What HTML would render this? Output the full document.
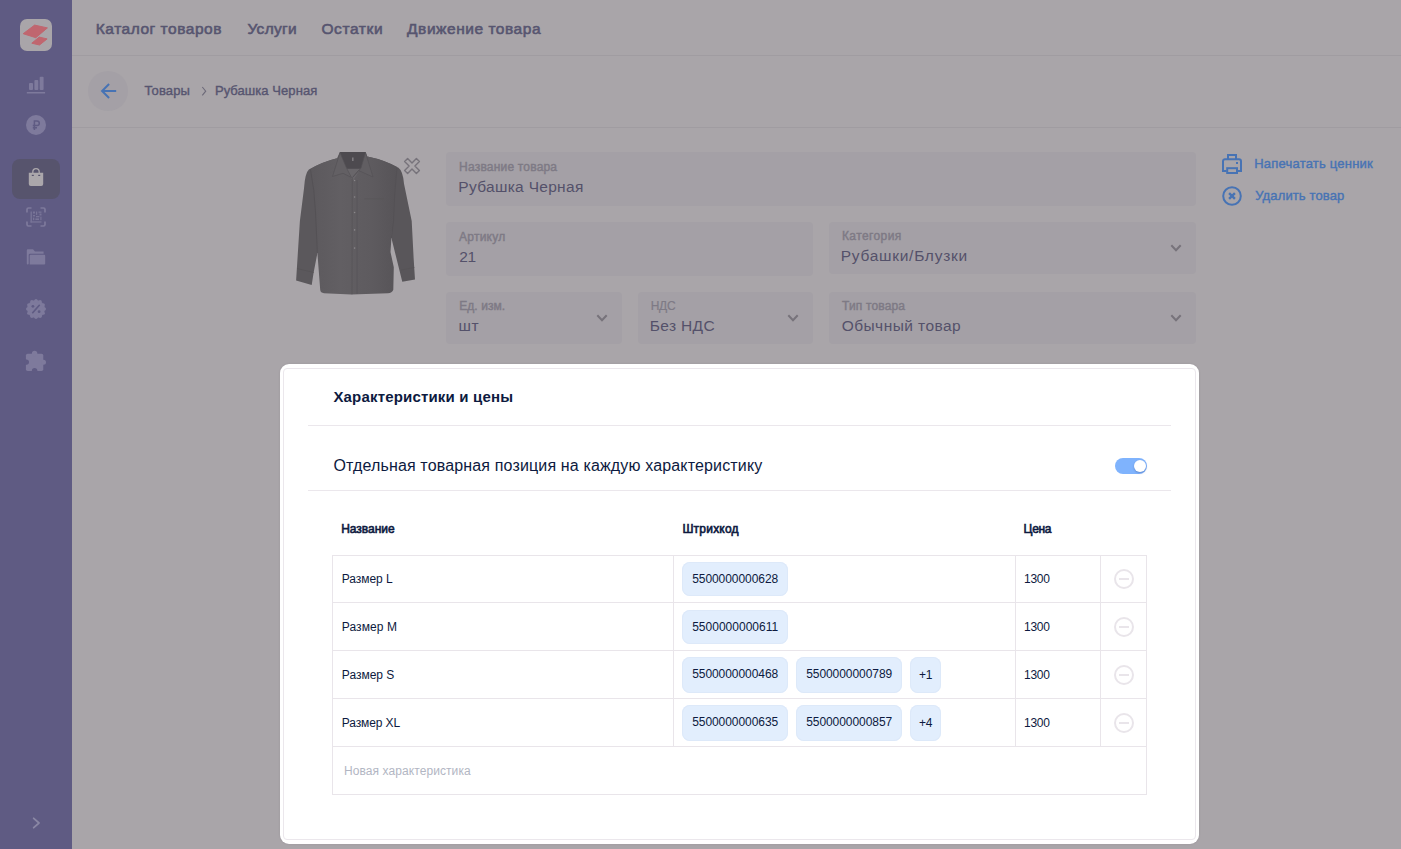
<!DOCTYPE html>
<html lang="ru">
<head>
<meta charset="utf-8">
<title>Рубашка Черная</title>
<style>
*{box-sizing:border-box;margin:0;padding:0}
html,body{width:1401px;height:849px;overflow:hidden}
body{position:relative;background:#a9a5a9;font-family:"Liberation Sans",sans-serif;color:#54516a}
.abs{position:absolute}
.t{position:absolute;white-space:nowrap;line-height:1}
#side{position:absolute;left:0;top:0;width:72px;height:849px;background:#5f5b83}
#side .act{position:absolute;left:12px;top:159px;width:48px;height:40px;border-radius:8px;background:#57546d}
.hline{position:absolute;left:72px;right:0;height:1px;background:#a09ca1}
#back{position:absolute;left:88px;top:71px;width:40px;height:40px;border-radius:50%;background:#a4a0a6}
.f{position:absolute;background:#a4a0a6;border-radius:4px}
.f svg{position:absolute;right:14px;top:22px}
#cardo{position:absolute;left:280px;top:364px;width:919px;height:480px;background:#fff;border-radius:9px;box-shadow:0 0 2px rgba(60,50,70,.16)}
#card{position:absolute;left:283px;top:368px;width:913px;height:472px;background:#fff;border:1px solid #ebe7ec;border-radius:4px}
.hl{position:absolute;left:308px;width:863px;height:1px;background:#ebe7ec}
#tbl{position:absolute;left:332px;top:555px;width:815px;height:240px;border:1px solid #e9e5ea}
.r{position:absolute;left:333px;width:813px;height:1px;background:#e9e5ea}
.c{position:absolute;top:556px;width:1px;height:190px;background:#e9e5ea}
.chip{position:absolute;border-radius:8px;background:#e2eefd;box-shadow:inset 0 0 0 1px #dde9f9}
#tog{position:absolute;left:1115px;top:458px;width:32px;height:16px;border-radius:8px;background:#7fb3fd}
#tog i{position:absolute;right:1px;top:2px;width:12px;height:12px;border-radius:50%;background:#fff;box-shadow:0 1px 2px rgba(40,60,120,.35)}
.minus{position:absolute;left:1114px;width:20px;height:20px;border:2px solid #e9e5ea;border-radius:50%}
.minus:after{content:"";position:absolute;left:3px;top:7px;width:10px;height:2px;background:#e9e5ea}
</style>
</head>
<body>
<!-- SIDEBAR -->
<div id="side">
  <svg class="abs" style="left:20px;top:19px" width="32" height="32" viewBox="0 0 32 32"><rect width="32" height="32" rx="7" fill="#a9a5a9"/><path d="M3.2 14.7 L14.6 6.1 L27.4 8.9 L15.8 18.7 Z" fill="#c0666f" stroke="#c0666f" stroke-width="1" stroke-linejoin="round"/><path d="M11.8 24.2 L19.2 18.1 L27.1 19.9 L19.5 26 Z" fill="#c0666f" stroke="#c0666f" stroke-width="1" stroke-linejoin="round"/></svg>
  <svg class="abs" style="left:26px;top:75px" width="20" height="20" viewBox="0 0 20 20" fill="#7e7a9c"><rect x="3" y="8" width="4" height="7" rx="1"/><rect x="8.4" y="5" width="3.9" height="10" rx="1"/><rect x="13.7" y="1.8" width="3.9" height="13.2" rx="1"/><rect x="0.8" y="17" width="18.3" height="1.5"/></svg>
  <svg class="abs" style="left:26px;top:115px" width="20" height="20" viewBox="0 0 20 20"><circle cx="10" cy="10" r="10" fill="#7e7a9c"/><path d="M8.4 15 V6 H11 a2.3 2.3 0 0 1 0 4.6 H6.8 M6.8 12.7 H11" fill="none" stroke="#5f5b83" stroke-width="1.5"/></svg>
  <div class="act"></div>
  <svg class="abs" style="left:26px;top:166px" width="20" height="22" viewBox="0 0 20 22"><path d="M6.8 7 V5.9 a3.2 3.2 0 0 1 6.4 0 V7" fill="none" stroke="#aba7ab" stroke-width="1.3"/><path d="M2.8 6.8 H17.2 V18 a2 2 0 0 1 -2 2 H4.8 a2 2 0 0 1 -2 -2 Z" fill="#aba7ab"/><rect x="5.8" y="8.8" width="2" height="1.2" fill="#57546d"/><rect x="12.2" y="8.8" width="2" height="1.2" fill="#57546d"/></svg>
  <svg class="abs" style="left:26px;top:207px" width="20" height="20" viewBox="0 0 20 20" fill="none" stroke="#7e7a9c"><path d="M1 5.5 V2.5 a1.5 1.5 0 0 1 1.5 -1.5 H5.5 M14.5 1 H17.5 a1.5 1.5 0 0 1 1.5 1.5 V5.5 M19 14.5 V17.5 a1.5 1.5 0 0 1 -1.5 1.5 H14.5 M5.5 19 H2.5 a1.5 1.5 0 0 1 -1.5 -1.5 V14.5" stroke-width="1.7"/><g stroke="none" fill="#7e7a9c" opacity=".85"><rect x="4.5" y="4.5" width="1.4" height="11"/><rect x="4.5" y="14.3" width="11" height="1.3"/><rect x="7" y="4.5" width="2" height="2"/><rect x="10" y="4.5" width="1.2" height="3.4"/><rect x="12.5" y="4.5" width="3" height="1.3"/><rect x="13.5" y="6.5" width="2" height="2"/><rect x="7" y="8" width="2" height="1.4"/><rect x="10" y="9" width="3.4" height="1.3"/><rect x="14.3" y="9.6" width="1.2" height="3.6"/><rect x="7" y="10.6" width="1.3" height="2.6"/><rect x="9.4" y="11.4" width="3.6" height="1.6"/></g></svg>
  <svg class="abs" style="left:26px;top:248px" width="20" height="18" viewBox="0 0 20 18" fill="#7e7a9c"><path d="M0.8 2.3 a1 1 0 0 1 1 -1 H7 L9 3.4 H17.6 V5.8 H4 a1.3 1.3 0 0 0 -1.3 1.3 V15.4 a1 1 0 0 1 -1 1 H1.8 a1 1 0 0 1 -1 -1 Z"/><path d="M3.7 7.8 a1 1 0 0 1 1 -1 H18.2 a1 1 0 0 1 1 1 V15.4 a1 1 0 0 1 -1 1 H3.7 Z"/></svg>
  <svg class="abs" style="left:25px;top:298px" width="22" height="22" viewBox="-11 -11 22 22"><g fill="#7e7a9c"><circle r="8.9"/><circle cx="0.00" cy="-8.30" r="1.7"/><circle cx="4.15" cy="-7.19" r="1.7"/><circle cx="7.19" cy="-4.15" r="1.7"/><circle cx="8.30" cy="-0.00" r="1.7"/><circle cx="7.19" cy="4.15" r="1.7"/><circle cx="4.15" cy="7.19" r="1.7"/><circle cx="0.00" cy="8.30" r="1.7"/><circle cx="-4.15" cy="7.19" r="1.7"/><circle cx="-7.19" cy="4.15" r="1.7"/><circle cx="-8.30" cy="0.00" r="1.7"/><circle cx="-7.19" cy="-4.15" r="1.7"/><circle cx="-4.15" cy="-7.19" r="1.7"/></g><path d="M-3.3 3.7 L3.3 -3.7" stroke="#5f5b83" stroke-width="1.7" stroke-linecap="round"/><circle cx="-3.1" cy="-2.7" r="1.4" fill="#5f5b83"/><circle cx="3.1" cy="2.7" r="1.4" fill="#5f5b83"/></svg>
  <svg class="abs" style="left:24px;top:349px" width="24" height="24" viewBox="24 349 24 24"><rect x="25.9" y="353.7" width="17.4" height="17.4" rx="1.8" fill="#7e7a9c"/><circle cx="34.6" cy="353.5" r="2.7" fill="#7e7a9c"/><circle cx="43.5" cy="362.2" r="2.5" fill="#7e7a9c"/><circle cx="26.3" cy="362.1" r="2.7" fill="#5f5b83"/><circle cx="34.6" cy="370.6" r="2.7" fill="#5f5b83"/><rect x="24.5" y="359.6" width="1.6" height="5" fill="#5f5b83"/><rect x="32" y="370.8" width="5.2" height="1.6" fill="#5f5b83"/></svg>
  <svg class="abs" style="left:28px;top:815px" width="16" height="16" viewBox="0 0 16 16"><path d="M5.7 3.3 L11 8 L5.7 12.7" fill="none" stroke="#8a87a4" stroke-width="1.8" stroke-linecap="round" stroke-linejoin="round"/></svg>
</div>

<!-- HEADER LINES / BACK -->
<div class="hline" style="top:55px"></div>
<div class="hline" style="top:127px"></div>
<div id="back"><svg class="abs" style="left:10px;top:10px" width="20" height="20" viewBox="0 0 20 20"><path d="M18.2 10 H4.6 M11.1 3 L4.1 10 L11.1 17" fill="none" stroke="#4773b4" stroke-width="2"/></svg></div>
<svg class="abs" style="left:199px;top:84px" width="10" height="14" viewBox="0 0 10 14"><path d="M3.3 3 L6.7 7.2 L3.3 11.4" fill="none" stroke="#6d6a79" stroke-width="1.1"/></svg>

<!-- SHIRT -->
<svg class="abs" style="left:290px;top:148px" width="130" height="150" viewBox="290 148 130 150">
  <defs><linearGradient id="sg" x1="0" x2="1" y1="0" y2="0"><stop offset="0" stop-color="#5c595d"/><stop offset=".35" stop-color="#625f63"/><stop offset=".7" stop-color="#5e5b5f"/><stop offset="1" stop-color="#575458"/></linearGradient></defs>
  <!-- sleeves -->
  <path d="M337 158.300 Q322 162 308.900 169.600 Q305 173 304 188.500 L299.900 221 L296.100 280.400 L311.700 285.100 L313.600 272.800 L317.400 253 L322 200 Z" fill="#5b585c"/>
  <path d="M367.400 156.400 Q385 160 398.500 167.700 Q403 171 404 183.700 L411.700 221 L413.600 257.700 L415 279.400 L402.300 281.800 L391.400 238 L390 200 Z" fill="#59565a"/>
  <!-- body -->
  <path d="M340 152 L365.500 152 L367.400 156.400 Q385 160 397 167 L393.500 200 L391.400 238 L390.500 252 L393.800 267.200 L393.300 289.800 Q392 293 388 293.300 L351.300 294.500 L324 293.200 Q320.500 293 320.200 289.800 L317.400 253 L315.500 212 L310.500 169 Q322 162 337 158.300 Z" fill="url(#sg)"/>
  <!-- armhole seams -->
  <path d="M310.500 169.500 Q314.500 190 315.500 212 L317.400 253 M397 168 Q394 195 393.500 221 L391.400 238" stroke="#545155" stroke-width="1" fill="none"/>
  <!-- collar stand + inner -->
  <path d="M340 152 L365.500 152 L366 168.500 L353 171.500 L340.500 168.500 Z" fill="#4d4a4f"/>
  <path d="M345 168.800 L360.500 168.800 L353 181 Z" fill="#69666a"/>
  <rect x="352" y="157.500" width="1.600" height="3.500" fill="#7d7a7e"/>
  <!-- collar leaves -->
  <path d="M340 152.500 L332.500 176.500 L343 173.300 L351.500 177.500 L346.500 168 Z" fill="#636064" stroke="#555256" stroke-width=".7" stroke-linejoin="round"/>
  <path d="M365.500 152.500 L373 177 L358.500 170.500 L352.500 177.500 L361 168 Z" fill="#615e62" stroke="#555256" stroke-width=".7" stroke-linejoin="round"/>
  <!-- placket -->
  <path d="M352.300 178 L352 294.300 M357 180 L357 294" stroke="#575458" stroke-width=".8" fill="none"/>
  <!-- pocket -->
  <path d="M364.500 198.800 H384" stroke="#575458" stroke-width=".6" fill="none"/>
  <!-- cuffs -->
  <path d="M297 268.500 L313.800 272.500 M401 270 L414.400 267.500" stroke="#545155" stroke-width=".7" fill="none"/>
  <g fill="#8a878b"><circle cx="354.600" cy="180.500" r=".7"/><circle cx="354.600" cy="197" r=".8"/><circle cx="354.600" cy="212.500" r=".8"/><circle cx="354.600" cy="229.900" r=".8"/><circle cx="354.600" cy="248.100" r=".8"/></g>
</svg>
<svg class="abs" style="left:402px;top:156px" width="20" height="20" viewBox="-10 -10 20 20"><path d="M-7.4 -4.4 L-4.4 -7.4 L0 -2.9 L4.4 -7.4 L7.4 -4.4 L2.9 0 L7.4 4.4 L4.4 7.4 L0 2.9 L-4.4 7.4 L-7.4 4.4 L-2.9 0 Z" fill="none" stroke="#77737b" stroke-width="1.4" stroke-linejoin="round"/></svg>

<!-- FIELDS -->
<div class="f" style="left:446px;top:152px;width:750px;height:54px"></div>
<div class="f" style="left:446px;top:222px;width:367px;height:54px"></div>
<div class="f" style="left:829px;top:222px;width:367px;height:52px"><svg width="12" height="8" viewBox="0 0 12 8"><path d="M1.3 1.3 L6 6.3 L10.7 1.3" fill="none" stroke="#77737b" stroke-width="2"/></svg></div>
<div class="f" style="left:446px;top:292px;width:176px;height:52px"><svg width="12" height="8" viewBox="0 0 12 8"><path d="M1.3 1.3 L6 6.3 L10.7 1.3" fill="none" stroke="#77737b" stroke-width="2"/></svg></div>
<div class="f" style="left:638px;top:292px;width:175px;height:52px"><svg width="12" height="8" viewBox="0 0 12 8"><path d="M1.3 1.3 L6 6.3 L10.7 1.3" fill="none" stroke="#77737b" stroke-width="2"/></svg></div>
<div class="f" style="left:829px;top:292px;width:367px;height:52px"><svg width="12" height="8" viewBox="0 0 12 8"><path d="M1.3 1.3 L6 6.3 L10.7 1.3" fill="none" stroke="#77737b" stroke-width="2"/></svg></div>

<!-- ACTION ICONS -->
<svg class="abs" style="left:1222px;top:154px" width="20" height="20" viewBox="0 0 20 20" fill="none" stroke="#4773b4" stroke-width="2"><path d="M6 5 V1 H14 V5"/><path d="M4.5 17 H1 V7.2 a2 2 0 0 1 2 -2 H17 a2 2 0 0 1 2 2 V17 H15.5"/><rect x="5.2" y="14.2" width="9.8" height="4.8"/><rect x="14" y="8" width="2" height="2" fill="#4773b4" stroke="none"/></svg>
<svg class="abs" style="left:1222px;top:186px" width="20" height="20" viewBox="0 0 20 20" fill="none" stroke="#4773b4"><circle cx="10" cy="10" r="8.8" stroke-width="2"/><path d="M7.1 7.1 L12.9 12.9 M12.9 7.1 L7.1 12.9" stroke-width="2.4"/></svg>

<!-- CARD -->
<div id="cardo"></div><div id="card"></div>
<div class="hl" style="top:425px"></div>
<div class="hl" style="top:490px"></div>
<div id="tog"><i></i></div>
<div id="tbl"></div>
<div class="r" style="top:602px"></div>
<div class="r" style="top:650px"></div>
<div class="r" style="top:698px"></div>
<div class="r" style="top:746px"></div>
<div class="c" style="left:673px"></div>
<div class="c" style="left:1015px"></div>
<div class="c" style="left:1100px"></div>
<div class="chip" style="left:682px;top:562px;width:106px;height:34px"></div>
<div class="chip" style="left:682px;top:610px;width:106px;height:34px"></div>
<div class="chip" style="left:682px;top:657px;width:106px;height:36px"></div>
<div class="chip" style="left:796px;top:657px;width:106px;height:36px"></div>
<div class="chip" style="left:910px;top:657px;width:31px;height:36px"></div>
<div class="chip" style="left:682px;top:705px;width:106px;height:36px"></div>
<div class="chip" style="left:796px;top:705px;width:106px;height:36px"></div>
<div class="chip" style="left:910px;top:705px;width:31px;height:36px"></div>
<div class="minus" style="top:569px"></div><div class="minus" style="top:617px"></div><div class="minus" style="top:665px"></div><div class="minus" style="top:713px"></div>

<!-- TEXT -->
<div class="t" style="left:95.80px;top:21px;font-size:15.5px;color:#575570;letter-spacing:0.52px;-webkit-text-stroke:0.6px #575570">Каталог товаров</div>
<div class="t" style="left:247.50px;top:21px;font-size:15.5px;color:#575570;letter-spacing:0.299px;-webkit-text-stroke:0.6px #575570">Услуги</div>
<div class="t" style="left:321.40px;top:21px;font-size:15.5px;color:#575570;letter-spacing:0.618px;-webkit-text-stroke:0.6px #575570">Остатки</div>
<div class="t" style="left:407.10px;top:21px;font-size:15.5px;color:#575570;letter-spacing:0.531px;-webkit-text-stroke:0.6px #575570">Движение товара</div>
<div class="t" style="left:144.50px;top:84px;font-size:13px;color:#575570;letter-spacing:0.125px;-webkit-text-stroke:0.4px #575570">Товары</div>
<div class="t" style="left:214.90px;top:84px;font-size:13px;color:#575570;letter-spacing:0.064px;-webkit-text-stroke:0.4px #575570">Рубашка Черная</div>
<div class="t" style="left:459.12px;top:161px;font-size:12px;color:#7e7a85;letter-spacing:0.191px;-webkit-text-stroke:0.45px #7e7a85">Название товара</div>
<div class="t" style="left:458.30px;top:179px;font-size:15.5px;color:#54516a;letter-spacing:0.305px">Рубашка Черная</div>
<div class="t" style="left:459.12px;top:231px;font-size:12px;color:#7e7a85;letter-spacing:0.219px;-webkit-text-stroke:0.45px #7e7a85">Артикул</div>
<div class="t" style="left:459.30px;top:249px;font-size:15.5px;color:#54516a;letter-spacing:-0.3px">21</div>
<div class="t" style="left:841.93px;top:230px;font-size:12px;color:#7e7a85;letter-spacing:0.406px;-webkit-text-stroke:0.45px #7e7a85">Категория</div>
<div class="t" style="left:840.70px;top:248px;font-size:15.5px;color:#54516a;letter-spacing:0.733px">Рубашки/Блузки</div>
<div class="t" style="left:459.23px;top:300px;font-size:12px;color:#7e7a85;letter-spacing:0.06px;-webkit-text-stroke:0.45px #7e7a85">Ед. изм.</div>
<div class="t" style="left:458.40px;top:318px;font-size:15.5px;color:#54516a;letter-spacing:0.565px">шт</div>
<div class="t" style="left:650.70px;top:300px;font-size:12px;color:#7e7a85;letter-spacing:-0.3px;-webkit-text-stroke:0.2px #7e7a85">НДС</div>
<div class="t" style="left:649.80px;top:318px;font-size:15.5px;color:#54516a;letter-spacing:0.341px">Без НДС</div>
<div class="t" style="left:841.93px;top:300px;font-size:12px;color:#7e7a85;letter-spacing:0.165px;-webkit-text-stroke:0.45px #7e7a85">Тип товара</div>
<div class="t" style="left:841.70px;top:318px;font-size:15.5px;color:#54516a;letter-spacing:0.447px">Обычный товар</div>
<div class="t" style="left:1254.20px;top:157px;font-size:13px;color:#4773b4;letter-spacing:0.212px;-webkit-text-stroke:0.4px #4773b4">Напечатать ценник</div>
<div class="t" style="left:1255.20px;top:189px;font-size:13px;color:#4773b4;letter-spacing:0.136px;-webkit-text-stroke:0.4px #4773b4">Удалить товар</div>
<div class="t" style="left:333.40px;top:389px;font-size:15px;color:#0d1a40;letter-spacing:0.178px;font-weight:bold">Характеристики и цены</div>
<div class="t" style="left:333.40px;top:458px;font-size:16px;color:#0d1a40;letter-spacing:0.151px">Отдельная товарная позиция на каждую характеристику</div>
<div class="t" style="left:341.20px;top:523px;font-size:12px;color:#0d1a40;letter-spacing:-0.036px;-webkit-text-stroke:0.6px #0d1a40">Название</div>
<div class="t" style="left:682.40px;top:523px;font-size:12px;color:#0d1a40;letter-spacing:0.219px;-webkit-text-stroke:0.6px #0d1a40">Штрихкод</div>
<div class="t" style="left:1023.60px;top:523px;font-size:12px;color:#0d1a40;letter-spacing:-0.3px;-webkit-text-stroke:0.6px #0d1a40">Цена</div>
<div class="t" style="left:341.80px;top:573px;font-size:12px;color:#0d1a40;letter-spacing:-0.054px">Размер L</div>
<div class="t" style="left:1024.00px;top:573px;font-size:12px;color:#0d1a40;letter-spacing:-0.24px">1300</div>
<div class="t" style="left:341.80px;top:621px;font-size:12px;color:#0d1a40;letter-spacing:0.089px">Размер M</div>
<div class="t" style="left:1024.00px;top:621px;font-size:12px;color:#0d1a40;letter-spacing:-0.24px">1300</div>
<div class="t" style="left:341.80px;top:669px;font-size:12px;color:#0d1a40;letter-spacing:-0.011px">Размер S</div>
<div class="t" style="left:1024.00px;top:669px;font-size:12px;color:#0d1a40;letter-spacing:-0.24px">1300</div>
<div class="t" style="left:341.80px;top:717px;font-size:12px;color:#0d1a40;letter-spacing:-0.123px">Размер XL</div>
<div class="t" style="left:1024.00px;top:717px;font-size:12px;color:#0d1a40;letter-spacing:-0.24px">1300</div>
<div class="t" style="left:343.90px;top:765px;font-size:12px;color:#b2b6c3;letter-spacing:0.085px">Новая характеристика</div>
<div class="t" style="left:692.20px;top:573px;font-size:12px;color:#0d1a40;letter-spacing:-0.065px">5500000000628</div>
<div class="t" style="left:692.20px;top:621px;font-size:12px;color:#0d1a40;letter-spacing:0.009px">5500000000611</div>
<div class="t" style="left:692.20px;top:668px;font-size:12px;color:#0d1a40;letter-spacing:-0.065px">5500000000468</div>
<div class="t" style="left:806.20px;top:668px;font-size:12px;color:#0d1a40;letter-spacing:-0.065px">5500000000789</div>
<div class="t" style="left:919.00px;top:669px;font-size:12px;color:#0d1a40;letter-spacing:-0.3px">+1</div>
<div class="t" style="left:692.20px;top:716px;font-size:12px;color:#0d1a40;letter-spacing:-0.065px">5500000000635</div>
<div class="t" style="left:806.20px;top:716px;font-size:12px;color:#0d1a40;letter-spacing:-0.065px">5500000000857</div>
<div class="t" style="left:919.00px;top:717px;font-size:12px;color:#0d1a40;letter-spacing:-0.3px">+4</div>
</body>
</html>
